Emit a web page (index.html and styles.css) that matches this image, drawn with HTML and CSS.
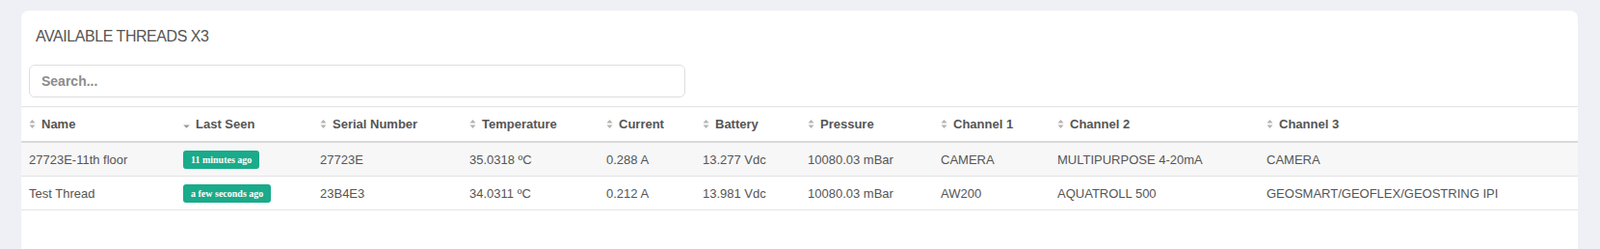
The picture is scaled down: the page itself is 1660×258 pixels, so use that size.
FILE: index.html
```html
<!DOCTYPE html>
<html>
<head>
<meta charset="utf-8">
<link rel="stylesheet" href="styles.css">
</head>
<body>
<div class="card">
  <div class="card-title">AVAILABLE THREADS X3</div>
  <div class="search-wrap">
    <input class="search" type="text" placeholder="Search...">
  </div>
  <table class="threads">
    <colgroup>
      <col class="c-name"><col class="c-seen"><col class="c-serial"><col class="c-temp"><col class="c-cur">
      <col class="c-bat"><col class="c-pres"><col class="c-ch1"><col class="c-ch2"><col class="c-ch3">
    </colgroup>
    <thead>
      <tr>
        <th><svg class="sort" viewBox="0 0 7 11"><path d="M0.5 4.6 L3.5 1 L6.5 4.6 Z M0.5 6.4 L3.5 10 L6.5 6.4 Z"/></svg>Name</th>
        <th><svg class="sort sort-desc" viewBox="0 0 7 11"><path d="M0.2 6.6 L3.5 9.8 L6.8 6.6 Z"/></svg>Last Seen</th>
        <th><svg class="sort" viewBox="0 0 7 11"><path d="M0.5 4.6 L3.5 1 L6.5 4.6 Z M0.5 6.4 L3.5 10 L6.5 6.4 Z"/></svg>Serial Number</th>
        <th><svg class="sort" viewBox="0 0 7 11"><path d="M0.5 4.6 L3.5 1 L6.5 4.6 Z M0.5 6.4 L3.5 10 L6.5 6.4 Z"/></svg>Temperature</th>
        <th><svg class="sort" viewBox="0 0 7 11"><path d="M0.5 4.6 L3.5 1 L6.5 4.6 Z M0.5 6.4 L3.5 10 L6.5 6.4 Z"/></svg>Current</th>
        <th><svg class="sort" viewBox="0 0 7 11"><path d="M0.5 4.6 L3.5 1 L6.5 4.6 Z M0.5 6.4 L3.5 10 L6.5 6.4 Z"/></svg>Battery</th>
        <th><svg class="sort" viewBox="0 0 7 11"><path d="M0.5 4.6 L3.5 1 L6.5 4.6 Z M0.5 6.4 L3.5 10 L6.5 6.4 Z"/></svg>Pressure</th>
        <th><svg class="sort" viewBox="0 0 7 11"><path d="M0.5 4.6 L3.5 1 L6.5 4.6 Z M0.5 6.4 L3.5 10 L6.5 6.4 Z"/></svg>Channel 1</th>
        <th><svg class="sort" viewBox="0 0 7 11"><path d="M0.5 4.6 L3.5 1 L6.5 4.6 Z M0.5 6.4 L3.5 10 L6.5 6.4 Z"/></svg>Channel 2</th>
        <th><svg class="sort" viewBox="0 0 7 11"><path d="M0.5 4.6 L3.5 1 L6.5 4.6 Z M0.5 6.4 L3.5 10 L6.5 6.4 Z"/></svg>Channel 3</th>
      </tr>
    </thead>
    <tbody>
      <tr class="odd">
        <td>27723E-11th floor</td>
        <td><span class="badge">11 minutes ago</span></td>
        <td>27723E</td>
        <td>35.0318 ºC</td>
        <td>0.288 A</td>
        <td>13.277 Vdc</td>
        <td>10080.03 mBar</td>
        <td>CAMERA</td>
        <td>MULTIPURPOSE 4-20mA</td>
        <td>CAMERA</td>
      </tr>
      <tr>
        <td>Test Thread</td>
        <td><span class="badge">a few seconds ago</span></td>
        <td>23B4E3</td>
        <td>34.0311 ºC</td>
        <td>0.212 A</td>
        <td>13.981 Vdc</td>
        <td>10080.03 mBar</td>
        <td>AW200</td>
        <td>AQUATROLL 500</td>
        <td>GEOSMART/GEOFLEX/GEOSTRING IPI</td>
      </tr>
    </tbody>
  </table>
</div>
</body>
</html>
```

FILE: styles.css
```css
html, body {
  margin: 0;
  height: 100%;
}
body {
  background: #eff0f6;
  font-family: "Liberation Sans", Arial, sans-serif;
  color: #555;
  padding: 11px 23px 0 22px;
  box-sizing: border-box;
  overflow: hidden;
}
.card {
  background: #fff;
  border-radius: 8px 8px 0 0;
  height: 100%;
}
.card-title {
  padding: 18px 15px 0 15px;
  font-size: 16px;
  line-height: 18px;
  letter-spacing: -0.45px;
  color: #555;
  height: 18px;
}
.search-wrap {
  padding: 20px 8px 9px 8px;
}
.search {
  display: block;
  box-sizing: border-box;
  width: 681px;
  height: 34px;
  border: 1px solid #dedede;
  border-radius: 6px;
  padding: 0 12px;
  font-family: "Liberation Sans", Arial, sans-serif;
  font-size: 14px;
  font-weight: bold;
  color: #555;
  outline: none;
}
.search::placeholder {
  color: #8c8c8c;
  font-weight: bold;
}
.threads {
  width: 100%;
  border-collapse: collapse;
  table-layout: fixed;
  font-size: 13px;
}
.c-name { width: 160px; }
.c-seen { width: 142px; }
.c-serial { width: 155px; }
.c-temp { width: 142px; }
.c-cur { width: 100px; }
.c-bat { width: 109px; }
.c-pres { width: 138px; }
.c-ch1 { width: 121px; }
.c-ch2 { width: 217px; }
.c-ch3 { width: 331px; }
.threads th {
  text-align: left;
  font-weight: bold;
  color: #555;
  height: 35px;
  padding: 0 8px;
  border-top: 1px solid #e3e3e3;
  border-bottom: 2px solid #d9d9d9;
  white-space: nowrap;
  vertical-align: middle;
}
.threads td {
  height: 34px;
  padding: 0 8px;
  border-bottom: 1px solid #e3e3e3;
  color: #555;
  white-space: nowrap;
  vertical-align: middle;
}
.threads tr.odd td {
  background: #f7f7f7;
}
.sort {
  width: 7px;
  height: 11px;
  margin-right: 6px;
  vertical-align: -1px;
  fill: #b3b3b3;
}
.sort-desc {
  fill: #999;
}
.badge {
  display: inline-block;
  background: #1aab8a;
  color: #fff;
  font-family: "Liberation Serif", "Times New Roman", serif;
  font-weight: bold;
  font-size: 10px;
  height: 19px;
  line-height: 19px;
  padding: 0 8px;
  border-radius: 3px;
  vertical-align: middle;
}
```
